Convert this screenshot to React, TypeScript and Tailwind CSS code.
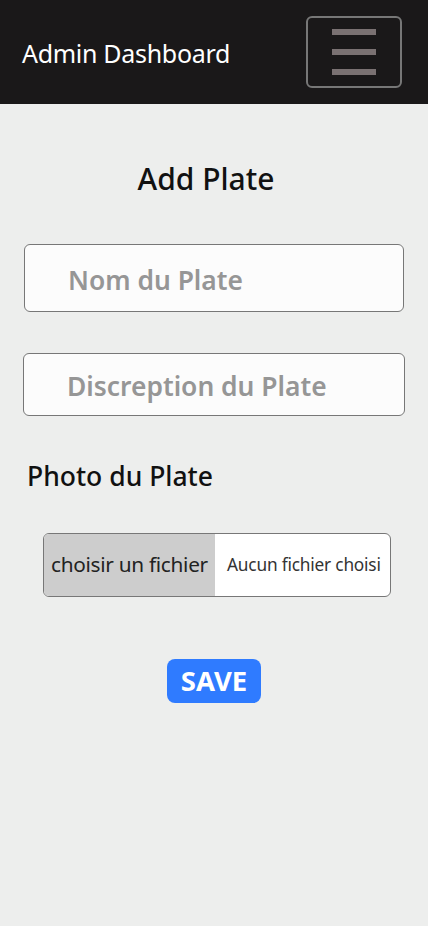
import { useState } from "react";

export default function App() {
  const [name, setName] = useState("");
  const [desc, setDesc] = useState("");

  return (
    <div className="min-h-[926px] bg-[#edeeed] font-['Noto_Sans','Open_Sans',sans-serif]">
      <header className="h-[104px] bg-[#1a1819] flex items-center justify-between pl-[22px] pr-[26px]">
        <h1 className="text-white text-[25px] tracking-[-0.3px] mt-[3px]">Admin Dashboard</h1>
        <button
          aria-label="Menu"
          className="w-[96px] h-[72px] border-2 border-[#777] rounded-[6px] flex flex-col items-center justify-center gap-[14px]"
        >
          <span className="block w-[44px] h-[6px] bg-[#7a7172]" />
          <span className="block w-[44px] h-[6px] bg-[#7a7172]" />
          <span className="block w-[44px] h-[6px] bg-[#7a7172]" />
        </button>
      </header>

      <main className="flex flex-col">
        <h2 className="text-center text-[30px] font-medium text-[#111] mt-[53px] pr-[16px] leading-[44px]">Add Plate</h2>

        <input
          value={name}
          onChange={(e) => setName(e.target.value)}
          placeholder="Nom du Plate"
          className="mt-[43px] mx-[24px] h-[68px] bg-[#fcfcfc] border border-[#777] rounded-[6px] pl-[43px] pt-[3px] text-[26.4px] font-semibold placeholder:text-[#969696] outline-none"
        />

        <input
          value={desc}
          onChange={(e) => setDesc(e.target.value)}
          placeholder="Discreption du Plate"
          className="mt-[41px] mx-[23px] h-[63px] bg-[#fcfcfc] border border-[#777] rounded-[6px] pl-[43px] pt-[2px] text-[26.4px] font-semibold placeholder:text-[#969696] outline-none"
        />

        <p className="mt-[40px] ml-[27px] text-[26.5px] font-medium text-[#111] leading-[40px]">Photo du Plate</p>

        <label className="mt-[37px] ml-[43px] w-[348px] h-[64px] flex border border-[#777] rounded-[6px] overflow-hidden bg-white cursor-pointer">
          <span className="w-[171px] bg-[#cdcdcd] flex items-center pl-[7px] text-[20.8px] text-[#222] tracking-[-0.3px] whitespace-nowrap">choisir un fichier</span>
          <span className="flex-1 flex items-center pl-[12px] text-[17.3px] text-[#333] whitespace-nowrap tracking-[-0.2px]">Aucun fichier choisi</span>
          <input type="file" className="hidden" />
        </label>

        <div className="flex justify-center mt-[62px]">
          <button className="bg-[#2f7bff] text-white text-[27.5px] font-bold rounded-[8px] w-[94px] h-[44px] flex items-center justify-center">SAVE</button>
        </div>
      </main>
    </div>
  );
}
